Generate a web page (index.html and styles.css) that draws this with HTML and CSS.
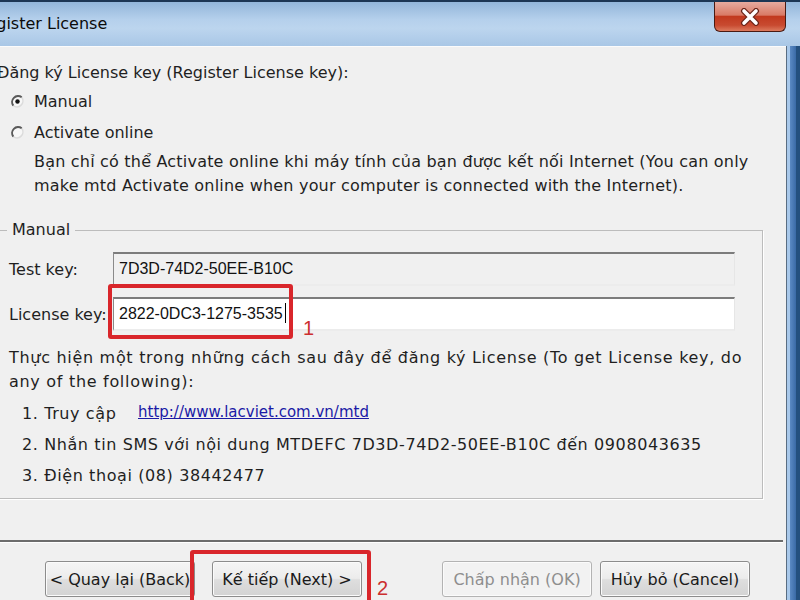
FILE: index.html
```html
<!DOCTYPE html>
<html lang="vi">
<head>
  <meta charset="UTF-8">
  <title>Register License</title>
  <link rel="stylesheet" href="styles.css">
</head>
<body>
  <div class="window">
    <div class="titlebar">
      <span class="title">Register License</span>
      <div class="close">
        <svg width="24" height="18" viewBox="0 0 24 18">
          <path d="M6 3 L18 15 M18 3 L6 15" stroke="#6b2418" stroke-width="6" stroke-linecap="round"/>
          <path d="M6 3 L18 15 M18 3 L6 15" stroke="#ffffff" stroke-width="3.6" stroke-linecap="round"/>
        </svg>
      </div>
    </div>
    <div class="frame">
      <div class="client">
        <p class="heading">Đăng ký License key (Register License key):</p>
        <div class="radio-row">
          <svg class="radio" width="15" height="15" viewBox="0 0 15 15">
            <circle cx="7.5" cy="7.5" r="6" fill="#f7f7f7"/>
            <path d="M11.7 3.3 A6 6 0 0 1 3.3 11.7" fill="none" stroke="#dcdcdc" stroke-width="1.6"/>
            <path d="M11.7 3.3 A6 6 0 0 0 3.3 11.7" fill="none" stroke="#5a5a5a" stroke-width="2"/>
            <circle cx="7.5" cy="7.5" r="2.2" fill="#111"/>
          </svg>
          Manual
        </div>
        <div class="radio-row">
          <svg class="radio" width="15" height="15" viewBox="0 0 15 15">
            <circle cx="7.5" cy="7.5" r="6" fill="#f7f7f7"/>
            <path d="M11.7 3.3 A6 6 0 0 1 3.3 11.7" fill="none" stroke="#dcdcdc" stroke-width="1.6"/>
            <path d="M11.7 3.3 A6 6 0 0 0 3.3 11.7" fill="none" stroke="#5a5a5a" stroke-width="2"/>
          </svg>
          Activate online
        </div>
        <p class="note">Bạn chỉ có thể Activate online khi máy tính của bạn được kết nối Internet (You can only<br>make mtd Activate online when your computer is connected with the Internet).</p>

        <fieldset class="group">
          <legend>Manual</legend>
          <div class="field">
            <label>Test key:</label>
            <div class="box readonly">7D3D-74D2-50EE-B10C</div>
          </div>
          <div class="field key">
            <label>License key:</label>
            <div class="box">2822-0DC3-1275-3535<span class="caret"></span></div>
            <span class="mark mark-1"></span>
            <span class="num num-1">1</span>
          </div>
          <p class="help">Thực hiện một trong những cách sau đây để đăng ký License (To get License key, do<br>any of the following):</p>
          <ul class="steps">
            <li><span class="step-label">1. Truy cập</span><a href="#">http://www.lacviet.com.vn/mtd</a></li>
            <li>2. Nhắn tin SMS với nội dung MTDEFC 7D3D-74D2-50EE-B10C đến 0908043635</li>
            <li>3. Điện thoại (08) 38442477</li>
          </ul>
        </fieldset>

        <div class="separator"></div>

        <div class="buttons">
          <button class="btn">&lt; Quay lại (Back)</button>
          <button class="btn btn-next">Kế tiếp (Next) &gt;</button>
          <button class="btn btn-ok" disabled>Chấp nhận (OK)</button>
          <button class="btn btn-cancel">Hủy bỏ (Cancel)</button>
          <span class="mark mark-2"></span>
          <span class="num num-2">2</span>
        </div>
      </div>
      <div class="edge"></div>
    </div>
  </div>
</body>
</html>
```

FILE: styles.css
```css
* {
  padding: 0;
  margin: 0;
  box-sizing: border-box;
}
body {
  background-color: #f0f0f0;
  font-family: "DejaVu Sans", "Noto Sans", sans-serif;
  font-size: 16px;
  color: #1f1f1f;
}
.window {
  width: 800px;
  height: 600px;
  overflow: hidden;
}

/* thanh tiêu đề */
.titlebar {
  height: 46px;
  display: flex;
  border-top: 2px solid #1d3654;
  background: linear-gradient(to bottom, #93b6da 0%, #b5d0ec 40%, #bcd5ee 60%, #a9c7e6 100%);
}
.title {
  margin-left: -24px;
  padding-top: 10px;
  line-height: 24px;
  color: #0b0b0b;
  white-space: nowrap;
}
.close {
  width: 72px;
  height: 30px;
  margin-left: auto;
  margin-right: 14px;
  display: flex;
  align-items: center;
  justify-content: center;
  border: 1px solid #4a1a12;
  border-top: none;
  border-radius: 0 0 6px 6px;
  background: linear-gradient(to bottom, #e7ab9f 0%, #d97a66 45%, #c2391f 50%, #c84a30 80%, #dc7a5e 100%);
}

/* vùng nội dung */
.frame {
  display: flex;
  height: 554px;
}
.client {
  width: 786px;
  flex: none;
  padding-top: 14px;
  border-top: 1px solid #fbfbfb;
}
.edge {
  flex: 1;
  background: linear-gradient(to right, #596d82 0, #596d82 1px, #a8c8ea 1px, #a8c8ea 4px, #5b8ac4 4px, #3a6aa6 10px, #24507f 10px);
}
.heading {
  margin-left: -3px;
  line-height: 24px;
  margin-bottom: 4px;
  white-space: nowrap;
}
.radio-row {
  display: flex;
  align-items: center;
  height: 24px;
  margin-bottom: 7px;
}
.radio {
  margin-left: 10px;
  margin-right: 9px;
}
.note {
  margin-left: 34px;
  margin-top: -1px;
  line-height: 24px;
  letter-spacing: 0.2px;
  white-space: nowrap;
}

/* nhóm Manual */
.group {
  margin: 22px 0 0 -2px;
  width: 765px;
  padding: 12px 0 7px 10px;
  border: 1px solid #bcbcbc;
  box-shadow: 1px 1px 0 #fff;
}
.group legend {
  margin-left: -2px;
  padding: 0 5px;
  line-height: 20px;
}
.field {
  display: flex;
  align-items: center;
  height: 34px;
  position: relative;
}
.field.key {
  margin-top: 11px;
}
.field label {
  width: 104px;
}
.box {
  width: 622px;
  height: 34px;
  padding-left: 5px;
  line-height: 30px;
  font-family: "Liberation Sans", Arial, sans-serif;
  font-size: 16px;
  color: #111;
  background-color: #fff;
  border-top: 2px solid #7c7c7c;
  border-left: 1px solid #8a8a8a;
  border-right: 1px solid #e6e6e6;
  border-bottom: 2px solid #ececec;
}
.box.readonly {
  background-color: #f0f0f0;
}
.caret {
  display: inline-block;
  width: 1px;
  height: 20px;
  margin-left: 2px;
  vertical-align: -4px;
  background-color: #000;
}
.help {
  margin-top: 15px;
  line-height: 24px;
  letter-spacing: 0.7px;
  white-space: nowrap;
}
.steps {
  list-style: none;
  margin-top: 3px;
  padding-left: 13px;
  line-height: 31px;
  letter-spacing: 0.6px;
  white-space: nowrap;
}
.step-label {
  display: inline-block;
  width: 116px;
}
.steps a {
  font-family: "DejaVu Sans", sans-serif;
  font-size: 15px;
  letter-spacing: 0;
  color: #1a1aa6;
  vertical-align: 2px;
}

/* nút bấm */
.separator {
  margin-top: 41px;
  width: 783px;
  border-top: 2px solid #6c6c6c;
  border-bottom: 1px solid #fff;
}
.buttons {
  position: relative;
  display: flex;
  margin-top: 18px;
  padding-left: 45px;
}
.btn {
  width: 150px;
  height: 36px;
  font-family: "DejaVu Sans", "Noto Sans", sans-serif;
  font-size: 16px;
  color: #1a1a1a;
  border: 1px solid #8c8c8c;
  border-radius: 3px;
  background: linear-gradient(to bottom, #f5f5f5 0%, #ececec 48%, #dedede 52%, #d3d3d3 100%);
  box-shadow: inset 0 0 0 1px #fbfbfb;
}
.btn-next {
  margin-left: 17px;
}
.btn-ok {
  margin-left: 80px;
  color: #8e8e8e;
  border-color: #b3b3b3;
  background: #f2f2f2;
}
.btn-cancel {
  margin-left: 8px;
}

/* khung đỏ đánh dấu */
.mark {
  position: absolute;
  border: 4px solid #d9262b;
  border-radius: 3px;
}
.mark-1 {
  left: 99px;
  top: -13px;
  width: 185px;
  height: 55px;
}
.mark-2 {
  left: 190px;
  top: -11px;
  width: 181px;
  height: 60px;
}
.num {
  position: absolute;
  font-family: "Liberation Sans", Arial, sans-serif;
  font-size: 20px;
  line-height: 24px;
  color: #cc2f2f;
}
.num-1 {
  left: 294px;
  top: 19px;
}
.num-2 {
  left: 377px;
  top: 15px;
}
```
